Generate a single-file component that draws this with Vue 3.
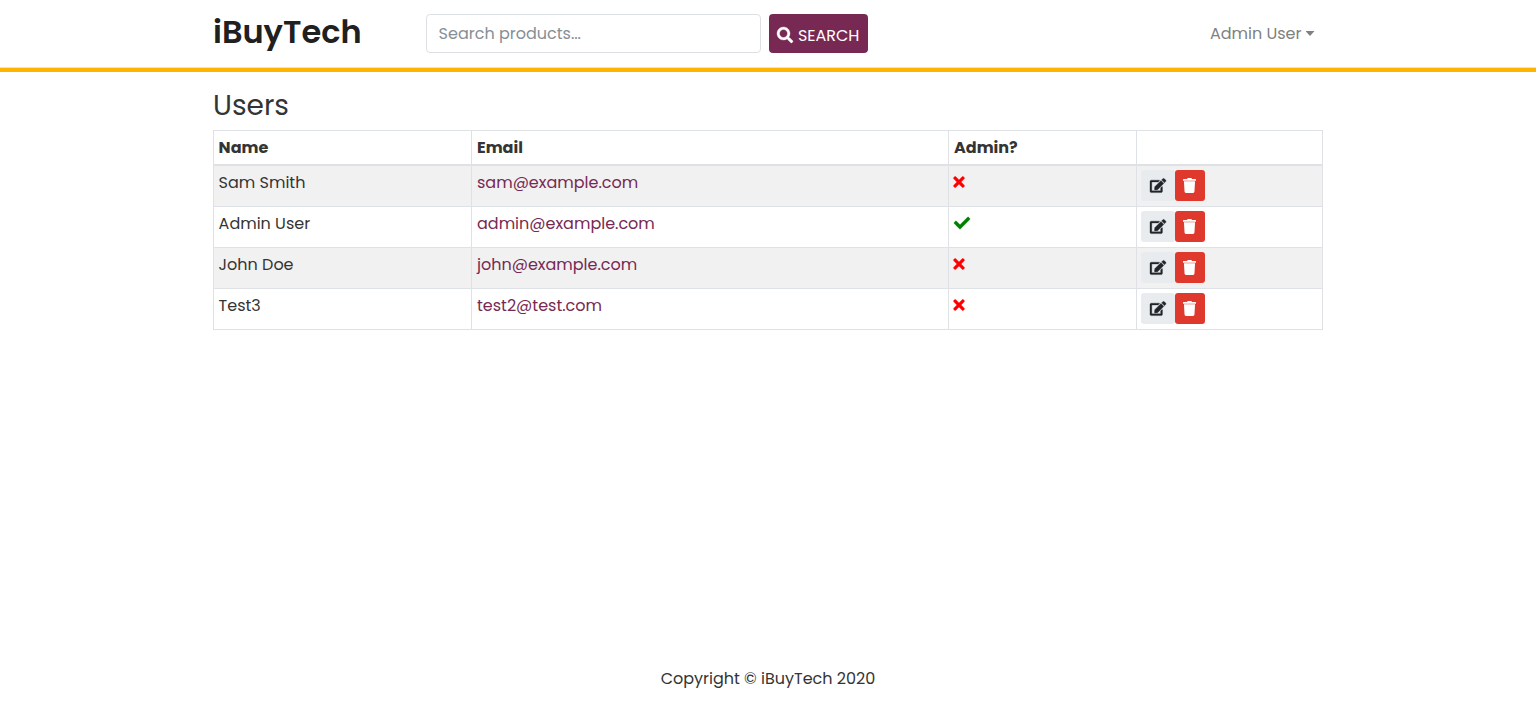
<script setup>
const users = [
  { name: 'Sam Smith', email: 'sam@example.com', admin: false },
  { name: 'Admin User', email: 'admin@example.com', admin: true },
  { name: 'John Doe', email: 'john@example.com', admin: false },
  { name: 'Test3', email: 'test2@test.com', admin: false },
]
</script>

<template>
  <div class="page">
    <header class="navbar">
      <div class="container bar">
        <a class="brand">iBuyTech</a>
        <form class="search" @submit.prevent>
          <div class="field">Search products...</div>
          <button class="search-btn" type="submit">
            <svg width="16" height="16" viewBox="0 0 512 512"><path fill="currentColor" stroke="currentColor" stroke-width="10" d="M505 442.7L405.300 343c-4.500-4.500-10.600-7-17-7H372c27.600-35.300 44-79.700 44-128C416 93.100 322.900 0 208 0S0 93.100 0 208s93.100 208 208 208c48.300 0 92.700-16.400 128-44v16.300c0 6.400 2.500 12.500 7 17l99.700 99.700c9.400 9.400 24.600 9.400 33.900 0l28.300-28.300c9.400-9.400 9.400-24.600.1-34zM208 336c-70.700 0-128-57.200-128-128 0-70.700 57.200-128 128-128 70.700 0 128 57.200 128 128 0 70.700-57.200 128-128 128z" /></svg>
            <span>SEARCH</span>
          </button>
        </form>
        <div class="account"><span>Admin User</span><i class="caret"></i></div>
      </div>
    </header>
    <main class="container main">
      <h1>Users</h1>
      <table>
        <colgroup><col class="c-name"><col class="c-email"><col class="c-admin"><col class="c-actions"></colgroup>
        <thead>
          <tr>
            <th>Name</th>
            <th>Email</th>
            <th>Admin?</th>
            <th></th>
          </tr>
        </thead>
        <tbody>
          <tr v-for="u in users" :key="u.email">
            <td>{{ u.name }}</td>
            <td><a class="email">{{ u.email }}</a></td>
            <td class="status">
              <svg v-if="u.admin" class="yes" width="16" height="16" viewBox="0 0 512 512"><path fill="currentColor" stroke="currentColor" stroke-width="14" d="M173.898 439.404l-166.400-166.400c-9.997-9.997-9.997-26.206 0-36.204l36.203-36.204c9.997-9.998 26.207-9.998 36.204 0L192 312.690 432.095 72.596c9.997-9.997 26.207-9.997 36.204 0l36.203 36.204c9.997 9.997 9.997 26.206 0 36.204l-294.400 294.401c-9.998 9.997-26.207 9.997-36.204-.001z" /></svg>
              <svg v-else class="no" width="12" height="16" viewBox="0 0 352 512"><path fill="currentColor" stroke="currentColor" stroke-width="14" d="M242.720 256l100.070-100.070c12.280-12.280 12.280-32.190 0-44.480l-22.240-22.240c-12.280-12.280-32.190-12.280-44.480 0L176 189.280 75.930 89.210c-12.280-12.280-32.190-12.280-44.480 0L9.210 111.450c-12.280 12.280-12.280 32.190 0 44.480L109.280 256 9.210 356.070c-12.280 12.280-12.280 32.190 0 44.480l22.240 22.240c12.280 12.280 32.200 12.280 44.480 0L176 322.720l100.070 100.070c12.280 12.280 32.200 12.280 44.480 0l22.240-22.240c12.280-12.280 12.280-32.190 0-44.480L242.720 256z" /></svg>
            </td>
            <td>
              <div class="actions">
                <button class="edit" aria-label="Edit">
                  <svg width="16" height="15" viewBox="0 0 576 512"><path fill="currentColor" stroke="currentColor" stroke-width="12" d="M402.600 83.200l90.200 90.200c3.800 3.800 3.800 10 0 13.800L274.400 405.600l-92.800 10.300c-12.400 1.400-22.900-9.100-21.500-21.500l10.300-92.800L388.800 83.200c3.800-3.800 10-3.800 13.800 0zm162-22.900l-48.800-48.800c-15.200-15.200-39.900-15.200-55.200 0l-35.400 35.400c-3.800 3.800-3.800 10 0 13.800l90.200 90.200c3.800 3.800 10 3.800 13.800 0l35.400-35.400c15.200-15.300 15.200-40 0-55.200zM384 346.200V448H64V128h229.800c3.200 0 6.200-1.300 8.500-3.500l40-40c7.600-7.600 2.200-20.500-8.500-20.500H48C21.500 64 0 85.500 0 112v352c0 26.500 21.500 48 48 48h352c26.500 0 48-21.500 48-48V306.200c0-10.700-12.900-16-20.500-8.500l-40 40c-2.200 2.300-3.500 5.300-3.500 8.500z" /></svg>
                </button>
                <button class="delete" aria-label="Delete">
                  <svg width="13" height="15" viewBox="0 0 448 512"><path fill="currentColor" d="M432 32H312l-9.400-18.700A24 24 0 0 0 281.100 0H166.800a23.720 23.720 0 0 0-21.400 13.300L136 32H16A16 16 0 0 0 0 48v32a16 16 0 0 0 16 16h416a16 16 0 0 0 16-16V48a16 16 0 0 0-16-16zM53.200 467a48 48 0 0 0 47.900 45h245.800a48 48 0 0 0 47.900-45L416 112H32z" /></svg>
                </button>
              </div>
            </td>
          </tr>
        </tbody>
      </table>
    </main>
    <footer>Copyright © iBuyTech 2020</footer>
  </div>
</template>

<style>
body { margin: 0; background: #fff; }
</style>

<style scoped>
* { box-sizing: border-box; }
.page { font-family: Poppins, Inter, sans-serif; font-size: 16px; line-height: 24px; color: #343434; height: 722px; display: flex; flex-direction: column; overflow: hidden; white-space: nowrap; }
svg { display: block; flex: none; overflow: visible; }
.container { width: 1110px; margin: 0 auto; }
.navbar { height: 72px; border-bottom: 4px solid #ffb400; box-shadow: inset 0 -1px 0 #e9e4da; flex: none; }
.bar { display: flex; align-items: flex-start; }
.brand { width: 212.600px; padding-top: 8px; font-size: 32px; line-height: 48px; font-weight: 600; color: #202020; }
.search { display: flex; gap: 8px; padding-top: 14.400px; }
.field { width: 335px; height: 38.400px; border: 1px solid #dce0e5; border-radius: 4px; padding: 7px 12px; color: #868e96; }
button { border: 0; padding: 0; font: inherit; display: flex; align-items: center; justify-content: center; }
.search-btn { width: 99.700px; height: 38.400px; border-radius: 4px; background: #772953; color: #fff; gap: 4.500px; padding-top: 4px; }
.search-btn svg { margin-top: -1px; }
.account { margin-left: auto; margin-right: 8.500px; padding-top: 22px; display: flex; color: #808080; }
.caret { width: 9px; height: 5px; margin: 9px 0 0 4px; background: #808080; clip-path: polygon(0 0, 100% 0, 50% 100%); }
.main { flex: 1; }
h1 { margin: 15px 0 8px; height: 35px; font-size: 28px; line-height: 37px; font-weight: 400; }
table { width: 1110px; table-layout: fixed; border-collapse: separate; border-spacing: 0; border-top: 1px solid #dee2e6; border-left: 1px solid #dee2e6; }
.c-name { width: 258px; }
.c-email { width: 477px; }
.c-admin { width: 188px; }
th, td { text-align: left; vertical-align: top; border-right: 1px solid #dee2e6; border-bottom: 1px solid #dee2e6; padding: 5px 4px 0 5px; }
th:first-child, td:first-child { padding-left: 4.600px; }
th { height: 35px; border-bottom-width: 2px; font-weight: 700; }
td { height: 41px; }
tbody tr:nth-child(odd) { background: #f1f1f1; }
.email { color: #772953; }
.status svg { margin-top: 3px; }
.status .no { margin-left: -.6px; }
.no { color: #f00; }
.yes { color: #008000; }
.actions { display: flex; margin: -.6px 0 0 -1px; }
.actions button { height: 30.800px; border-radius: 3px; }
.actions .edit { width: 33.500px; background: #e9ecef; color: #212529; }
.actions .delete { width: 30.400px; background: #df382c; color: #fff; }
footer { height: 55px; text-align: center; flex: none; }
</style>
